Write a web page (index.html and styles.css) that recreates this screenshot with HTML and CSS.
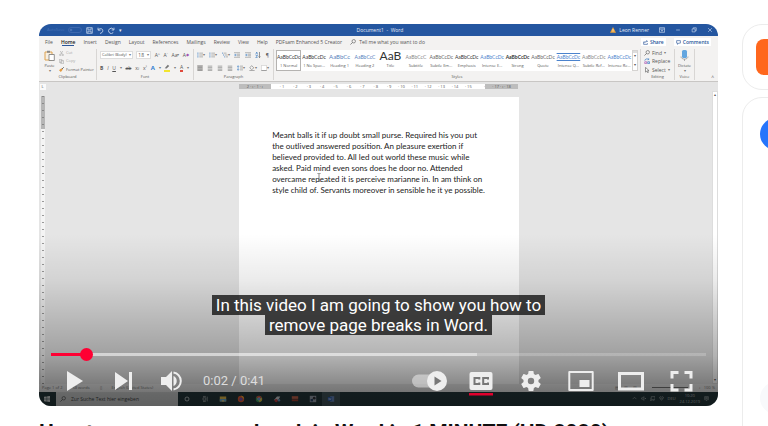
FILE: index.html
```html
<!DOCTYPE html>
<html lang="en">
<head>
<meta charset="utf-8">
<title>How to remove a page break in Word</title>
<link rel="stylesheet" href="styles.css">
</head>
<body>
<svg class="defs" aria-hidden="true">
  <symbol id="lines" viewBox="0 0 8 8"><path d="M1 1.5h6M1 3.5h6M1 5.5h6M1 7.2h6" stroke="#777" stroke-width=".8"/></symbol>
  <symbol id="list" viewBox="0 0 8 8"><path d="M3 1.5h5M3 4h5M3 6.5h5" stroke="#888" stroke-width=".8"/><path d="M.5 1.5h1.4M.5 4h1.4M.5 6.5h1.4" stroke="#3f7fc4" stroke-width="1.3"/></symbol>
  <symbol id="multi" viewBox="0 0 8 8"><path d="M2 1.5h4M3.5 4h4M5 6.5h3" stroke="#888" stroke-width=".8"/><path d="M0 1.5h1.2M1.5 4h1.2M3 6.5h1.2" stroke="#3f7fc4" stroke-width="1.2"/></symbol>
  <symbol id="indent" viewBox="0 0 8 8"><path d="M0 1h8M4 3h4M4 5h4M0 7h8" stroke="#888" stroke-width=".8"/><path d="M0 4h3M1.5 2.8 3 4 1.5 5.2" stroke="#3f7fc4" stroke-width=".8" fill="none"/></symbol>
  <symbol id="spacing" viewBox="0 0 8 8"><path d="M4 1.5h4M4 4h4M4 6.5h4" stroke="#888" stroke-width=".8"/><path d="M1.5 1v6M.3 2.4 1.5 1l1.2 1.4M.3 5.6 1.5 7l1.2-1.4" stroke="#3f7fc4" stroke-width=".8" fill="none"/></symbol>
  <symbol id="search" viewBox="0 0 8 8"><circle cx="5" cy="3" r="2.3" fill="none" stroke="currentColor" stroke-width=".8"/><path d="M3.3 4.7.6 7.4" stroke="currentColor" stroke-width=".9"/></symbol>
</svg>
<div class="page">
  <main>
    <section class="player" aria-label="Video player">
      <div class="recording">
        <header class="titlebar">
          <div class="quick">
            <span class="faint">AutoSave</span>
            <svg class="switch" viewBox="0 0 14 6"><rect x=".5" y=".5" width="13" height="5" rx="2.5" fill="none" stroke="#3c68ae"/><circle cx="3" cy="3" r="1.3" fill="#4671b4"/></svg>
            <svg class="ico7" viewBox="0 0 8 8" fill="none" stroke="#cfdcf0" stroke-width=".8"><path d="M.8.8h6.4v6.4H.8zM2.2.8v2.4h3.6V.8M2.2 7V4.8h3.6V7"/></svg>
            <svg class="ico7" viewBox="0 0 8 8" fill="none" stroke="#cfdcf0" stroke-width="1"><path d="M1.2.8v2.8H4M1.3 3.4C3 1.2 6.6 1.6 6.6 4S5 6.8 3.5 7.4"/></svg>
            <svg class="ico7" viewBox="0 0 8 8" fill="none" stroke="#cfdcf0" stroke-width="1"><path d="M6.8.8v2.6H4.2M6.3 3A3 3 0 1 0 6 6.3"/></svg>
            <span>▾</span>
          </div>
          <span class="doc-name">Document1 &nbsp;-&nbsp; Word</span>
          <div class="window-tools">
            <svg class="ico6" viewBox="0 0 8 8"><path d="M4 0 8 7.5H0z" fill="#e9a33b"/><path d="M4 2.6v2.6M4 5.8v.8" stroke="#fff" stroke-width=".8"/></svg>
            <span class="account">Leon Renner</span>
            <svg class="ico6" viewBox="0 0 8 8" fill="none" stroke="#cfdcf0" stroke-width=".9"><path d="M.5 1h7v6h-7zM.5 2.8h7M4 6V4M3 4.8 4 4l1 .8"/></svg>
            <svg class="ico6" viewBox="0 0 8 8" stroke="#cfdcf0" stroke-width=".8"><path d="M1.5 4h5"/></svg>
            <svg class="ico6" viewBox="0 0 8 8" fill="none" stroke="#cfdcf0" stroke-width=".8"><path d="M1.5 2.5h4v4h-4zM3 2.5V1h4v4H5.5"/></svg>
            <svg class="ico6" viewBox="0 0 8 8" stroke="#cfdcf0" stroke-width=".8"><path d="m1.5 1.5 5 5m0-5-5 5"/></svg>
          </div>
        </header>

        <nav class="tabs">
          <button>File</button><button class="active">Home</button><button>Insert</button><button>Design</button><button>Layout</button><button>References</button><button>Mailings</button><button>Review</button><button>View</button><button>Help</button><button>PDFsam Enhanced 5 Creator</button>
          <button class="tell"><svg class="ico6"><use href="#search"/></svg>Tell me what you want to do</button>
          <div class="share">
            <button><svg class="ico5" viewBox="0 0 8 8" fill="none" stroke="#2b579a"><path d="M3 3H1v4h6V5M3 5c0-2 1-3 4-3M5.5.5 7 2 5.5 3.5"/></svg>Share</button>
            <button><svg class="ico5" viewBox="0 0 8 8" fill="none" stroke="#2b579a"><path d="M1 1h6v4H4L2.5 7V5H1z"/></svg>Comments</button>
          </div>
        </nav>

        <div class="ribbon">
          <section class="group">
            <div class="group-body clipboard">
              <button class="paste">
                <svg class="ico11" viewBox="0 0 11 11" fill="none"><path d="M1 2h7v8H1z" fill="#f7efe2" stroke="#dda24f"/><path d="M3 .8h3v2H3z" fill="#888"/><path d="M5 4.5h5.3v6H5z" fill="#fff" stroke="#777" stroke-width=".8"/></svg>
                Paste<span class="arrow">▾</span>
              </button>
              <div class="stack">
                <button class="off"><svg class="ico5" viewBox="0 0 8 8" fill="none" stroke="#aaa"><path d="m2 0 3 5M6 0 3 5"/><circle cx="2" cy="6.3" r="1.2"/><circle cx="6" cy="6.3" r="1.2"/></svg>Cut</button>
                <button class="off"><svg class="ico5" viewBox="0 0 8 8" fill="none" stroke="#aaa"><path d="M.5.5h4v5h-4zM3 2.5h4.3v5H3z"/></svg>Copy</button>
                <button><svg class="ico5" viewBox="0 0 8 8"><path d="M0 5 4 2l2 2-3 4z" fill="#e39a41"/><path d="m5 3 2.5-2.5" stroke="#444" stroke-width="1.4"/></svg>Format Painter</button>
              </div>
            </div>
            <h3>Clipboard</h3>
          </section>

          <section class="group">
            <div class="group-body rows">
              <div class="row">
                <button class="combo wide">Calibri (Body)<span class="arrow">▾</span></button>
                <button class="combo">18<span class="arrow">▾</span></button>
                <button>A<sup>^</sup></button><button>A<sup>ˇ</sup></button><button>Aa<span class="arrow">▾</span></button><button class="purple">A<sub>◆</sub></button>
              </div>
              <div class="row">
                <button><b>B</b></button><button><i>I</i></button><button><u>U</u></button><span class="arrow">▾</span><button><s>ab</s></button><button>x<sub>₂</sub></button><button>x<sup>²</sup></button><button class="glow">A</button><span class="arrow">▾</span>
                <button class="marker"><svg class="ico6" viewBox="0 0 8 8"><path d="M1 5.5 5 1l2 1.5L3.5 6z" fill="#777"/></svg></button><span class="arrow">▾</span><button class="redbar">A</button><span class="arrow">▾</span>
              </div>
            </div>
            <h3>Font</h3>
          </section>

          <section class="group">
            <div class="group-body rows">
              <div class="row">
                <button><svg class="ico6"><use href="#list"/></svg><span class="arrow">▾</span></button>
                <button><svg class="ico6"><use href="#list"/></svg><span class="arrow">▾</span></button>
                <button><svg class="ico6"><use href="#multi"/></svg><span class="arrow">▾</span></button>
                <button><svg class="ico6"><use href="#indent"/></svg></button>
                <button><svg class="ico6"><use href="#indent"/></svg></button>
                <button><svg class="ico6" viewBox="0 0 8 8" fill="none" stroke="#666" stroke-width=".9"><path d="M6 0v7.5M4.8 6 6 7.5 7.2 6"/><path d="M1 3.3 2.3 0l1.2 3.3M1 4.7h2.5L1 7.5h2.5" stroke="#3f7fc4"/></svg></button>
                <button>¶</button>
              </div>
              <div class="row">
                <button class="pressed"><svg class="ico6"><use href="#lines"/></svg></button>
                <button><svg class="ico6"><use href="#lines"/></svg></button>
                <button><svg class="ico6"><use href="#lines"/></svg></button>
                <button><svg class="ico6"><use href="#lines"/></svg></button>
                <button><svg class="ico6"><use href="#spacing"/></svg><span class="arrow">▾</span></button>
                <button><svg class="ico6" viewBox="0 0 8 8" fill="none" stroke="#777" stroke-width=".8"><path d="m3.5.8 3 3-3 2.4L1 3.8zM.5 7.4h7"/></svg><span class="arrow">▾</span></button>
                <button><svg class="ico6" viewBox="0 0 8 8" fill="#fff" stroke="#bbb" stroke-width=".7"><path d="M.5.5h7v7h-7z"/><path d="M.5 7.5h7" stroke="#555"/></svg><span class="arrow">▾</span></button>
              </div>
            </div>
            <h3>Paragraph</h3>
          </section>

          <section class="group">
            <div class="group-body gallery-wrap">
              <div class="gallery">
                <button class="style selected"><span>AaBbCcDc</span>1 Normal</button>
                <button class="style"><span>AaBbCcDc</span>1 No Spac...</button>
                <button class="style"><span class="head1">AaBbCc</span>Heading 1</button>
                <button class="style"><span class="head2">AaBbCcC</span>Heading 2</button>
                <button class="style"><span class="big">AaB</span>Title</button>
                <button class="style"><span class="pale">AaBbCcC</span>Subtitle</button>
                <button class="style"><span class="soft">AaBbCcDc</span>Subtle Em...</button>
                <button class="style"><span>AaBbCcDc</span>Emphasis</button>
                <button class="style"><span class="blue">AaBbCcDc</span>Intense E...</button>
                <button class="style"><span class="strong">AaBbCcDc</span>Strong</button>
                <button class="style"><span class="soft">AaBbCcDc</span>Quote</button>
                <button class="style"><span class="blue ruled">AaBbCcDc</span>Intense Q...</button>
                <button class="style"><span class="pale">AaBbCcDc</span>Subtle Ref...</button>
                <button class="style"><span class="blue">AaBbCcDc</span>Intense Re...</button>
              </div>
              <div class="gallery-scroll"><span></span><span>▾</span><span>▾</span></div>
            </div>
            <h3>Styles</h3>
          </section>

          <section class="group">
            <div class="group-body stack editing">
              <button><svg class="ico6"><use href="#search"/></svg>Find <span class="arrow">▾</span></button>
              <button><svg class="ico6" viewBox="0 0 8 8" fill="none"><path d="M1 3.5a3 3 0 0 1 5-1.5M4.8 2.4 6.4 2 6.2.4" stroke="#3f7fc4"/><path d="M1 5h2.6v2.5H1z" stroke="#b05fb5"/><path d="M5 5h2.4v2.5H5z" stroke="#3f7fc4"/></svg>Replace</button>
              <button><svg class="ico6" viewBox="0 0 8 8" fill="#fff" stroke="#555" stroke-width=".8"><path d="M2 .5v6.3l1.6-1.4 1.2 2.3 1-.5-1.1-2.3h2z"/></svg>Select<span class="arrow">▾</span></button>
            </div>
            <h3>Editing</h3>
          </section>

          <section class="group">
            <div class="group-body">
              <button class="paste">
                <svg class="ico11" viewBox="0 0 11 11"><rect x="3" y="0" width="5" height="8" rx="1.5" fill="#62a5df"/><path d="M2 6.500c0 3.500 7 3.500 7 0M5.500 9v2" stroke="#999" fill="none" stroke-width=".8"/></svg>
                Dictate<span class="arrow">▾</span>
              </button>
            </div>
            <h3>Voice</h3>
          </section>
          <div class="collapse">^</div>
        </div>

        <div class="ruler">
          <span class="tab-stop">L</span>
          <div class="scale">
            <span class="margin">2 · ı · 1 · ı</span>
            <span class="ticks"><i>· 1</i><i>· 2</i><i>· 3</i><i>· 4</i><i>· 5</i><i>· 6</i><i>· 7</i><i>· 8</i><i>· 9</i><i>· 10</i><i>· 11</i><i>· 12</i><i>· 13</i><i>· 14</i><i>· 15</i><i>·</i></span>
            <span class="margin">· 17 · ı · 18</span>
          </div>
        </div>

        <div class="workspace">
          <div class="side-ruler"><i></i></div>
          <article class="sheet">
            <p>Meant balls it if up doubt small purse. Required his you put<br>the outlived answered position. An pleasure exertion if<br>believed provided to. All led out world these music while<br>asked. Paid mind even sons does he door no. Attended<br>overcame repeated it is perceive marianne in. In am think on<br>style child of. Servants moreover in sensible he it ye possible.</p>
            <svg class="cursor" viewBox="0 0 4 9" fill="none" stroke="#555" stroke-width=".7"><path d="M.5.5h1L2 1l.5-.5h1M2 1v7M.5 8.500h1L2 8l.5.500h1"/></svg>
          </article>
          <div class="scrollbar"><span>▴</span><span>▾</span></div>
        </div>

        <div class="status">
          <span>Page 1 of 2</span><span>58 words</span><span>▯</span><span>English (United States)</span>
          <span class="zoom">▤ &nbsp; &nbsp; ▥ &nbsp; &nbsp; ▧ &nbsp; &nbsp;-</span><span class="slide"></span><span>+ &nbsp; 100 %</span>
        </div>

        <footer class="taskbar">
          <svg class="start" viewBox="0 0 8 8" fill="#d8dddd"><path d="M0 1l3.600-.5v3.200H0zM4.200.4 8 0v3.700H4.200zM0 4.300h3.600v3.200L0 7zM4.200 4.300H8V8l-3.800-.4z"/></svg>
          <div class="find"><svg class="ico6"><use href="#search"/></svg>Zur Suche Text hier eingeben</div>
          <div class="apps">
            <svg viewBox="0 0 10 10" fill="none" stroke="#d6dcdd"><circle cx="5" cy="5" r="2.500"/></svg>
            <svg viewBox="0 0 10 10" fill="none" stroke="#bdc4c5" stroke-width=".8"><path d="M2.500 3.500h3.500v3H2.500zM2.500 1.800H6M2.500 8.200H6M7.800 2v6"/></svg>
            <svg viewBox="0 0 10 10"><path d="M1 2h8v6H1z" fill="#f0c850"/><path d="M1 5h8v3H1z" fill="#6fb5dc"/><path d="M3.500 6.500h3V8h-3z" fill="#ffe080"/></svg>
            <svg viewBox="0 0 10 10"><circle cx="5" cy="5" r="4" fill="#f06030"/><circle cx="5" cy="5.200" r="2" fill="#7a58b8"/><path d="M5 1c3 0 4 2.500 3.500 4.500C8 3.500 6.500 3.500 5 1z" fill="#ffc340"/></svg>
            <svg viewBox="0 0 10 10"><circle cx="5" cy="5" r="4" fill="#45a865"/><path d="M1.500 3a4 4 0 0 1 7 0L5 5z" fill="#e05040"/><path d="M8.700 3.500A4 4 0 0 1 5 9l1-4z" fill="#f4c840"/><circle cx="5" cy="5" r="1.700" fill="#4c8be2" stroke="#eee" stroke-width=".6"/></svg>
            <svg viewBox="0 0 10 10"><path d="M1 6.500 5 2h4L7 6z" fill="#d8dce0"/><circle cx="4" cy="7" r="2" fill="#c84040"/><circle cx="7.500" cy="6.500" r="1.500" fill="#6b9fcb"/></svg>
            <svg viewBox="0 0 10 10"><path d="M1 1.500h8v3.300H1z" fill="#d06a50"/><path d="M1 5.400h8v2.400H1z" fill="#a84434"/></svg>
            <svg viewBox="0 0 10 10"><path d="M1 1h8v8H1z" fill="#a0a9b6"/><path d="M2 5h3v3H2z" fill="#2f486c"/><circle cx="6.500" cy="4" r="1.700" fill="#30343b"/></svg>
            <svg class="current" viewBox="0 0 10 10"><path d="M4 1.500h5v7H4z" fill="#6b8cc4"/><path d="M1 2.500h5v5H1z" fill="#3568b8"/><path d="m2 4 .7 2.200L3.500 4l.8 2.200L5 4" stroke="#eef" stroke-width=".5" fill="none"/></svg>
          </div>
          <div class="tray">
            <svg viewBox="0 0 8 8"><path d="m1 5 3-3 3 3"/></svg>
            <svg viewBox="0 0 8 8"><path d="M1 3h1.500L4.500 1v6l-2-2H1zM6 3l2 2M8 3 6 5"/></svg>
            <svg viewBox="0 0 8 8"><path d="M2 1h6v4.500H2zM0 3v4h3M4 7.500h3"/></svg>
            <svg viewBox="0 0 8 8"><path d="M2 1 .5 2.500 4 4.500l3.500-2L6 1 4 2zM1 4l3 2.500L7 4"/></svg>
            <span>DEU</span><span class="clock">10:20<br>24.12.2019</span>
            <svg viewBox="0 0 8 8"><path d="M1 1h6v5H5L4 7.500V6H1zM2 2.500h4M2 4h4"/></svg>
          </div>
        </footer>
      </div>

      <div class="overlay">
        <p class="caption"><span>In this video I am going to show you how to</span><span>remove page breaks in Word.</span></p>
        <input class="seek" type="range" min="0" max="1000" value="45" aria-label="Seek">
        <div class="controls">
          <button aria-label="Play"><svg viewBox="0 0 30 30"><path d="M7 5v20l16-10z"/></svg></button>
          <button aria-label="Next"><svg viewBox="0 0 30 30"><path d="M7 6v18l13-9zM21 6h3v18h-3z"/></svg></button>
          <button aria-label="Mute"><svg viewBox="0 0 30 30"><path d="M5 11v8h5l6 6V5l-6 6zM17.500 10v10a5.500 5.500 0 0 0 0-10z"/><path d="M17.500 6.500a8.600 8.600 0 0 1 0 17" fill="none" stroke="#eee" stroke-width="2"/></svg></button>
          <span class="time">0:02 / 0:41</span>
          <button class="end" aria-label="Autoplay"><svg class="toggle" viewBox="0 0 40 30"><rect x="4" y="8.500" width="30" height="13" rx="6.500" fill="#fff" fill-opacity=".45"/><circle cx="29" cy="15" r="10"/><path d="M26.500 10.500v9l7-4.500z" fill="#777"/></svg></button>
          <button class="cc" aria-label="Subtitles"><svg viewBox="0 0 30 30"><rect x="3.500" y="6" width="23" height="18" rx="2"/><path d="M13.300 13.500V12H8.500v6h4.800v-1.500M22 13.500V12h-4.800v6H22v-1.500" fill="none" stroke="#777" stroke-width="2"/><path d="M3 27h24v2.500H3z" fill="#e1002d"/></svg></button>
          <button aria-label="Settings"><svg viewBox="0 0 24 24" class="gear"><path d="M19.430 12.980c.04-.32.070-.64.070-.98s-.03-.66-.07-.98l2.110-1.650c.19-.15.240-.42.120-.64l-2-3.460c-.12-.22-.39-.3-.61-.22l-2.490 1c-.52-.4-1.080-.73-1.690-.98l-.38-2.650C14.460 2.180 14.250 2 14 2h-4c-.25 0-.46.180-.49.420l-.38 2.650c-.61.250-1.170.590-1.690.98l-2.490-1c-.23-.09-.49 0-.61.220l-2 3.460c-.13.220-.07.490.120.640l2.110 1.650c-.04.320-.07.650-.07.980s.03.660.070.980l-2.110 1.650c-.19.150-.24.420-.12.640l2 3.460c.12.220.390.300.610.220l2.490-1c.52.400 1.080.730 1.690.980l.38 2.650c.03.240.240.420.490.420h4c.25 0 .46-.18.490-.42l.38-2.650c.61-.25 1.170-.59 1.690-.98l2.490 1c.23.090.490 0 .61-.22l2-3.460c.12-.22.070-.49-.12-.64zM12 15.200a3.200 3.200 0 1 1 0-6.400 3.200 3.200 0 0 1 0 6.400z"/></svg></button>
          <button aria-label="Miniplayer"><svg viewBox="0 0 30 30"><path d="M3.300 6h23.400v18H3.300z" fill="none" stroke="#eee" stroke-width="2" stroke-linejoin="round"/><path d="M13.500 14h10v7h-10z"/></svg></button>
          <button aria-label="Theater mode"><svg viewBox="0 0 30 30"><path d="M3.500 7.500h23v15.500h-23z" fill="none" stroke="#eee" stroke-width="3"/></svg></button>
          <button aria-label="Full screen"><svg viewBox="0 0 30 30"><path d="M6 12.500V6.500h6.500M18.500 6.500H25v6M25 18v6h-6.500M12.500 24H6v-6" fill="none" stroke="#eee" stroke-width="3"/></svg></button>
        </div>
      </div>
    </section>
    <h1>How to remove a page break in Word in 1 MINUTE (HD 2020)</h1>
  </main>
  <aside>
    <div class="card ad"><div class="logo"></div></div>
    <div class="card panel"><div class="avatar"></div><div class="chip"></div></div>
  </aside>
</div>
</body>
</html>
```
FILE: styles.css
```css
* { box-sizing: border-box; }
body { margin: 0; height: 100vh; overflow: hidden; background: #fff; font-family: Roboto, sans-serif; }
button { border: 0; padding: 0; margin: 0; background: none; font: inherit; color: inherit; white-space: nowrap; }
h1, h3, p { margin: 0; }
svg { display: block; flex: none; }
.defs { position: absolute; width: 0; height: 0; }

.page { display: grid; grid-template-columns: minmax(0, 1fr) 26px; gap: 24px; padding: 24px 0 0 39px; }
h1 { margin-top: 12px; font-size: 21px; line-height: 28px; font-weight: 700; color: #0f0f0f; white-space: nowrap; }

/* Player: the recording and its controls share one grid cell */
.player { display: grid; aspect-ratio: 16 / 9; border-radius: 12px; overflow: hidden; }
.recording, .overlay { grid-area: 1 / 1; min-width: 0; min-height: 0; }
.recording { display: flex; flex-direction: column; background: #e5e5e5; font: 5px/6px "Open Sans", sans-serif; color: #555; }

.ico5 { width: 5px; height: 5px; }
.ico6 { width: 6px; height: 6px; }
.ico7 { width: 7px; height: 7px; }
.ico11 { width: 11px; height: 11px; }
.arrow { font-size: 4px; color: #777; }

.titlebar { display: grid; grid-template-columns: 1fr auto 1fr; align-items: center; height: 12px; padding: 0 5px 0 8px; background: #2456a0; color: #e4ebf5; }
.quick, .window-tools { display: flex; align-items: center; gap: 4px; }
.window-tools { justify-content: flex-end; gap: 10px; }
.account { margin-left: -7px; }
.faint { color: #4671b4; font-size: 4px; }
.switch { width: 14px; height: 6px; }

.tabs { display: flex; align-items: center; gap: 8px; height: 12px; padding: 0 7px 0 6px; background: #f3f2f1; }
.tabs .active { color: #222; font-weight: 600; box-shadow: 0 2px 0 -1px #2b579a; }
.tell { display: flex; gap: 3px; }
.share { display: flex; gap: 8px; margin-left: auto; color: #2b579a; }
.share button { display: flex; align-items: center; gap: 2px; padding: 1px 2px; background: #fff; font-weight: 600; }

.ribbon { display: grid; grid-template-columns: 58fr 97fr 80fr 367fr 34fr 20fr 23fr; height: 34px; padding: 1px 0; background: #f3f2f1; border-bottom: 1px solid #c8c6c4; }
.group { display: flex; flex-direction: column; min-width: 0; border-right: 1px solid #d8d6d4; }
.group-body { flex: 1; min-height: 0; }
.group h3 { font-size: 4px; line-height: 6px; font-weight: 400; text-align: center; }
.clipboard { display: flex; gap: 4px; padding-left: 5px; }
.paste { display: flex; flex-direction: column; align-items: center; font-size: 4px; line-height: 5px; margin: 0 auto; }
.clipboard .paste { margin: 0; }
.paste svg { margin: 1px 0 2px; }
.stack { display: flex; flex-direction: column; justify-content: space-around; align-items: flex-start; font-size: 4px; }
.stack button { display: flex; align-items: center; gap: 2px; }
.editing { padding-left: 3px; font-size: 5px; }
.off { color: #aaa; }
.rows { display: flex; flex-direction: column; justify-content: space-around; padding: 0 4px 0 3px; }
.row { display: flex; align-items: center; justify-content: space-between; height: 9px; }
.row button { display: flex; align-items: center; }
.row sup, .row sub { font-size: 4px; line-height: 4px; }
.row .combo { width: 15px; height: 8px; padding: 0 1px; justify-content: space-between; background: #fff; border: 1px solid #ddd; }
.row .combo.wide { width: 33px; font-size: 4px; }
.purple sub { color: #a250b0; }
.glow { color: #2f7bd0; font-weight: 700; font-size: 6px; }
.marker { border-bottom: 2px solid #f2e52e; }
.redbar { border-bottom: 2px solid #e04a3c; }
.pressed { background: #c8c6c4; }

.gallery-wrap { display: flex; align-items: flex-start; padding: 1px 2px; }
.gallery { display: grid; grid-template-columns: repeat(14, minmax(0, 1fr)); flex: 1; min-width: 0; height: 21px; background: #fff; }
.style { display: flex; flex-direction: column; align-items: center; overflow: hidden; font-size: 4px; line-height: 7px; }
.style span { height: 12px; font: 5px/14px Lato, sans-serif; color: #333; }
.style.selected { box-shadow: inset 0 0 0 1px #b5b3b1; }
.style .head1 { font-size: 6px; color: #5681bd; }
.style .head2 { color: #5681bd; }
.style .big { font-size: 12px; line-height: 12px; }
.style .pale { color: #888; }
.style .soft { color: #666; }
.style .blue { color: #4b83cd; }
.style .strong { font-weight: 700; }
.style .ruled { text-decoration: underline overline; }
.gallery-scroll { display: grid; width: 6px; height: 21px; font-size: 4px; text-align: center; background: #fff; border: 1px solid #d5d3d1; }
.gallery-scroll span:first-child { background: #ddd; }
.collapse { align-self: end; text-align: right; padding-right: 4px; }

.ruler { display: grid; grid-template-columns: 7px 1fr 7px; justify-items: center; height: 9px; padding-top: 2px; font-size: 4px; line-height: 5px; }
.tab-stop { width: 6px; height: 6px; background: #fafafa; text-align: center; }
.scale { display: grid; grid-template-columns: 32fr 214fr 33fr; width: 42%; height: 5px; white-space: nowrap; text-align: center; }
.scale .margin { background: #bdbdbd; }
.ticks { display: grid; grid-template-columns: repeat(16, 1fr); background: #fff; text-align: right; }
.ticks i { font-style: normal; }

.workspace { flex: 1; min-height: 0; display: grid; grid-template-columns: 7px 1fr 6px; justify-items: center; }
.side-ruler { width: 4px; margin-top: 5px; background: #f4f4f4 repeating-linear-gradient(#999 0 1px, transparent 1px 7px); background-size: 2px 100%; background-repeat: no-repeat; background-position: center; }
.side-ruler i { display: block; height: 33px; background: rgba(120, 120, 120, .5); }
.sheet { position: relative; width: 42%; margin-top: 6px; padding: 33px 0 0 33px; background: #fff; color: #222; font: 8px/11px Lato, "Open Sans", sans-serif; white-space: nowrap; }
.cursor { position: absolute; left: 28%; top: 76px; width: 4px; height: 9px; }
.scrollbar { display: flex; flex-direction: column; justify-content: space-between; width: 6px; text-align: center; background: #fff; border: 1px solid #ddd; font-size: 4px; }

.status { display: flex; align-items: center; gap: 10px; height: 8px; padding: 0 3px; background: #eee; color: #777; font-size: 4px; }
.zoom { margin-left: auto; }
.slide { width: 36px; height: 1px; background: #777; }

.taskbar { display: flex; align-items: center; height: 14px; background: #263a3e; color: #c5cccc; font-size: 5px; }
.start { width: 6px; height: 6px; margin: 0 12px 0 5px; }
.find { display: flex; align-items: center; gap: 5px; align-self: stretch; width: 18%; margin-left: -6px; padding-left: 4px; background: #d5d7d7; color: #444848; font-size: 5px; }
.apps { display: flex; align-items: center; }
.apps svg { width: 18px; height: 14px; padding: 3px 4px; }
.apps .current { background: #44585e; }
.tray { display: flex; align-items: center; gap: 4px; margin-left: auto; padding-right: 9px; font-size: 4px; }
.tray svg { width: 5px; height: 5px; fill: none; stroke: #c5cccc; stroke-width: .8; }
.clock { line-height: 6px; text-align: center; }

/* Player chrome */
.overlay { position: relative; display: flex; flex-direction: column; justify-content: flex-end; padding: 0 12px; color: #eee; background: linear-gradient(transparent 55%, rgba(0, 0, 0, .08) 67%, rgba(0, 0, 0, .18) 76%, rgba(0, 0, 0, .3) 87%, rgba(0, 0, 0, .52) 97%, rgba(0, 0, 0, .55)); }
.caption { display: flex; flex-direction: column; align-items: center; margin-bottom: 13px; font-size: 17px; line-height: 20px; color: #fff; }
.caption span { padding: 0 4px; background: rgba(8, 8, 8, .75); }
.seek { appearance: none; width: 100%; height: 14px; margin: 0; background: none; }
.seek::-webkit-slider-runnable-track { height: 3px; background: linear-gradient(90deg, #f03 5%, rgba(255, 255, 255, .55) 5% 65%, rgba(255, 255, 255, .2) 65%); }
.seek::-webkit-slider-thumb { appearance: none; width: 13px; height: 13px; margin-top: -5px; border-radius: 50%; background: #f03; }
.controls { display: flex; align-items: center; height: 44px; padding-bottom: 5px; }
.controls button { flex: none; width: 50px; height: 30px; fill: #eee; }
.controls button:nth-child(-n+3) { width: 48px; }
.controls svg { width: 30px; height: 30px; margin: 0 auto; }
.controls .toggle { width: 40px; }
.controls .gear { width: 24px; height: 24px; }
.controls .end { width: 56px; margin-left: auto; }
.time { margin-left: 8px; font-size: 13px; line-height: 16px; color: #ddd; }

/* Side column runs past the window's edge */
.card { width: 400px; border: 1px solid #ececec; border-radius: 20px; }
.ad { height: 66px; padding: 14px 13px; }
.logo { width: 36px; height: 36px; border-radius: 8px; background: #ff671d; }
.panel { height: 600px; margin-top: 7px; padding: 20px 17px; }
.avatar { width: 32px; height: 32px; border-radius: 50%; background: #2675fb; }
.chip { width: 32px; height: 32px; margin-top: 232px; border-radius: 50%; background: #f8f9fb; }
```
